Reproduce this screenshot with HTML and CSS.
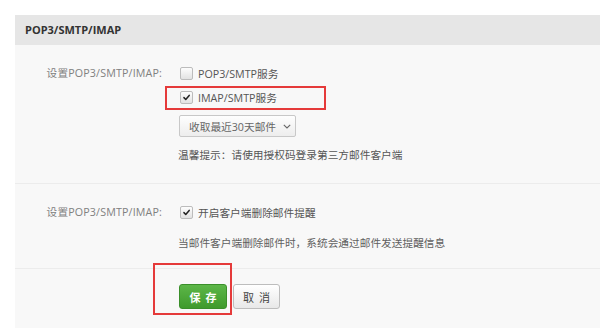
FILE: index.html
```html
<!DOCTYPE html>
<html lang="zh-CN">
<head>
<meta charset="utf-8">
<title>POP3/SMTP/IMAP</title>
<link rel="stylesheet" href="styles.css">
</head>
<body>
<div class="panel">
  <div class="panel-head">POP3/SMTP/IMAP</div>
  <div class="section">
    <div class="label">设置POP3/SMTP/IMAP:</div>
    <div class="controls">
      <div class="line"><span class="cb"></span><span>POP3/SMTP服务</span></div>
      <div class="line marked"><span class="cb on"><svg viewBox="0 0 12 12" width="12" height="12"><path d="M2.6 6.2 L5 8.6 L9.6 3.2" fill="none" stroke="#222" stroke-width="2" stroke-linecap="round" stroke-linejoin="round"/></svg></span><span>IMAP/SMTP服务</span></div>
      <div class="select">收取最近30天邮件<svg class="chev" viewBox="0 0 8 5" width="8" height="5"><path d="M0.8 0.8 L4 4 L7.2 0.8" fill="none" stroke="#666" stroke-width="1.1"/></svg></div>
      <div class="tip">温馨提示：请使用授权码登录第三方邮件客户端</div>
    </div>
  </div>
  <div class="section second">
    <div class="label">设置POP3/SMTP/IMAP:</div>
    <div class="controls">
      <div class="line"><span class="cb on"><svg viewBox="0 0 12 12" width="12" height="12"><path d="M2.6 6.2 L5 8.6 L9.6 3.2" fill="none" stroke="#222" stroke-width="2" stroke-linecap="round" stroke-linejoin="round"/></svg></span><span>开启客户端删除邮件提醒</span></div>
      <div class="line note">当邮件客户端删除邮件时，系统会通过邮件发送提醒信息</div>
    </div>
  </div>
  <div class="footer">
    <div class="btns">
      <button class="btn save">保存</button>
      <button class="btn cancel">取消</button>
    </div>
  </div>
</div>
</body>
</html>
```
FILE: styles.css
```css
html, body {
  margin: 0;
  padding: 0;
  background: #fff;
}
body {
  font-family: "Open Sans", "Noto Sans CJK SC", sans-serif;
  font-size: 10.7px;
  color: #555;
  height: 328px;
  overflow: hidden;
}
.panel {
  margin: 15px 0 0 15px;
  background: #f8f8f8;
  min-height: 313px;
}
.panel-head {
  height: 30px;
  line-height: 30px;
  background: #e6e6e6;
  padding-left: 10px;
  font-weight: bold;
  font-size: 11px;
  color: #333;
}
.section {
  display: grid;
  grid-template-columns: 147px 1fr;
  column-gap: 16px;
  padding: 16px 0 18px;
  border-bottom: 1px solid #ececec;
}
.section.second {
  padding: 16px 0 14px;
}
.label {
  text-align: right;
  line-height: 24px;
  color: #808080;
  letter-spacing: 0.15px;
}
.controls {
  display: flex;
  flex-direction: column;
  align-items: flex-start;
}
.line {
  display: flex;
  align-items: center;
  height: 24px;
  color: #555;
  position: relative;
}
.line.note {
  margin-top: 6px;
  color: #606060;
}
.marked::after {
  content: "";
  position: absolute;
  left: -13px;
  top: 1px;
  width: 157px;
  height: 20px;
  border: 2px solid #e53a3a;
}
.cb {
  width: 11px;
  height: 11px;
  border: 1px solid #bcbcbc;
  border-radius: 2px;
  background: linear-gradient(#fdfdfd, #e2e2e2);
  margin: 0 5px 0 2px;
  display: flex;
  align-items: center;
  justify-content: center;
}
.cb svg {
  width: 9px;
  height: 9px;
}
.select {
  margin-top: 6px;
  margin-left: 1px;
  height: 20px;
  width: 106px;
  padding-left: 9px;
  display: flex;
  align-items: center;
  border: 1px solid #c8c8c8;
  border-radius: 2px;
  background: linear-gradient(#fefefe, #ededed);
  color: #666;
}
.chev {
  margin-left: 7px;
}
.tip {
  margin-top: 8px;
  line-height: 20px;
  color: #555;
}
.footer {
  padding: 15px 0 0 164px;
  position: relative;
}
.footer::before {
  content: "";
  position: absolute;
  left: 138px;
  top: -6px;
  width: 75px;
  height: 48px;
  border: 2px solid #e53a3a;
}
.btns {
  display: flex;
  gap: 6px;
}
.btn {
  height: 25px;
  width: 48px;
  border-radius: 3px;
  font-family: "Noto Sans CJK SC", sans-serif;
  font-size: 11px;
  letter-spacing: 5px;
  text-indent: 5px;
  padding: 0;
  cursor: pointer;
}
.save {
  background: linear-gradient(#5cb648, #3f9a2c);
  border: 1px solid #3a8f2a;
  color: #fff;
  font-weight: bold;
}
.cancel {
  width: 47px;
  background: linear-gradient(#ffffff, #e8e8e8);
  border: 1px solid #bdbdbd;
  color: #444;
}
```
